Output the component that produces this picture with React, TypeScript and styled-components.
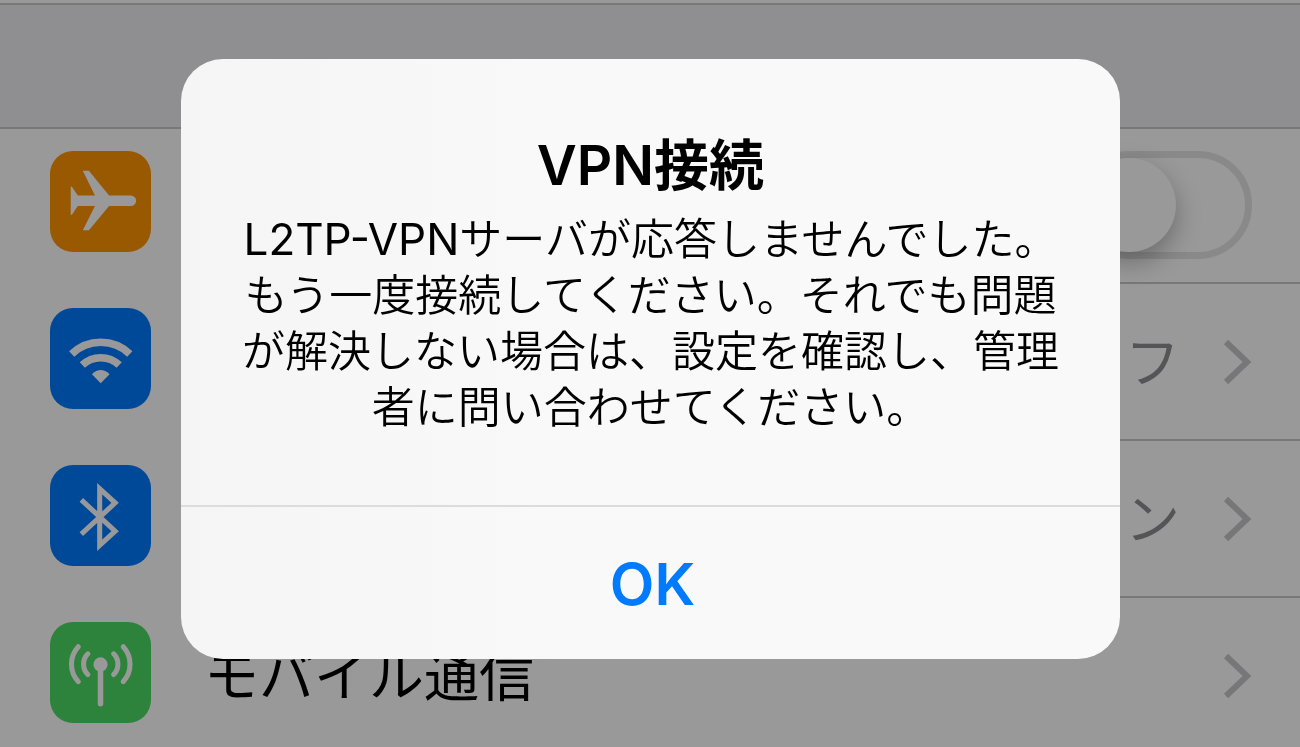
import React from 'react';
import styled, { createGlobalStyle } from 'styled-components';

const GlobalStyle = createGlobalStyle`
  * { box-sizing: border-box; }
  html, body, #root { height: 100%; }
  body {
    margin: 0;
    overflow: hidden;
    background: #ffffff;
    color: #000000;
    font-family: Inter, 'Noto Sans CJK JP', sans-serif;
  }
`;

const Page = styled.main`
  height: 100%;
  overflow: hidden;
`;

const PreviousGroup = styled.div`
  height: 5px;
  border-bottom: 2px solid #c8c7cc;
`;

const GroupGap = styled.div`
  height: 124px;
  background: #efeff4;
  border-bottom: 2px solid #c8c7cc;
`;

const List = styled.ul`
  margin: -2px 0 0;
  padding: 0;
  list-style: none;
`;

const Item = styled.li`
  display: flex;
  height: 157px;
  padding-left: 50px;
`;

const Tile = styled.span<{ $color: string }>`
  flex: none;
  width: 101px;
  height: 101px;
  margin: 24px 53px 0 0;
  border-radius: 23px;
  background: ${(p) => p.$color};

  svg {
    display: block;
    width: 100%;
    height: 100%;
  }
`;

const ItemBody = styled.div`
  display: flex;
  flex: 1;
  align-items: center;
  justify-content: space-between;
  padding-right: 48px;
  border-bottom: 2px solid #c8c7cc;
`;

const ItemLink = styled(ItemBody).attrs({ as: 'a' })<{ href: string }>`
  color: inherit;
  text-decoration: none;
`;

const Label = styled.span`
  font-size: 55px;
  line-height: 80px;
`;

const Value = styled.span`
  margin: 0 42px 0 auto;
  color: #8e8e93;
  font-size: 55px;
  line-height: 80px;
`;

const Chevron = styled.svg`
  flex: none;
  width: 30px;
  height: 46px;
`;

const Switch = styled.input`
  appearance: none;
  width: 177px;
  height: 108px;
  margin: 0 0 0 auto;
  border: 7px solid #e5e5e5;
  border-radius: 54px;
  background: #ffffff;

  &::before {
    content: '';
    display: block;
    width: 94px;
    height: 94px;
    border-radius: 50%;
    background: #ffffff;
    box-shadow: 0 10px 26px rgba(0, 0, 0, 0.3);
  }
`;

const Backdrop = styled.div`
  position: fixed;
  inset: 0;
  display: flex;
  align-items: flex-start;
  justify-content: center;
  padding: 59px 180px 0 181px;
  background: rgba(0, 0, 0, 0.4);
`;

const Alert = styled.section`
  flex: 1;
  overflow: hidden;
  border-radius: 42px;
  background: linear-gradient(90deg, #f5f5f5, #f9f9f9 40%);
  text-align: center;
`;

const AlertText = styled.div`
  padding: 66px 32px 70px;
`;

const Title = styled.h1`
  margin: 0;
  font-size: 55px;
  font-weight: 600;
  line-height: 80px;
`;

const Message = styled.p`
  margin: 6px 0 0;
  font-size: 43px;
  font-weight: 350;
  line-height: 56px;
  white-space: nowrap;
`;

const Latin = styled.span`
  font-size: 44px;
  font-weight: 400;
`;

const OkButton = styled.button`
  display: block;
  width: 100%;
  height: 154px;
  padding: 2px 0 0 4px;
  border: 0;
  border-top: 2px solid #dcdcdf;
  background: transparent;
  color: #007aff;
  font-family: inherit;
  font-size: 58px;
  font-weight: 600;
`;

const AirplaneIcon = () => (
  <svg viewBox="0 0 100 100" fill="#fff" aria-hidden="true">
    <path d="M20.500 35.500h1.200L27.500 44H44.500L32.500 19.500H38.500L58.500 44H80a5.200 5.200 0 0 1 0 10.500H58.500L38.500 78.500H32.500L44.500 54.500H27.500L21.700 63H20.500Z" />
  </svg>
);

const WifiIcon = () => (
  <svg viewBox="0 0 100 100" aria-hidden="true">
    <g fill="none" stroke="#fff" strokeWidth="7.500">
      <path d="M21.500 45.500A41.500 41.500 0 0 1 79 45.500" />
      <path d="M32 56.500A26.500 26.500 0 0 1 68.500 56.500" />
    </g>
    <path fill="#fff" d="M41.500 65.500Q50.200 57.500 59 65.500L50.200 74.500Z" />
  </svg>
);

const BluetoothIcon = () => (
  <svg viewBox="0 0 100 100" fill="none" stroke="#fff" strokeWidth="5" aria-hidden="true">
    <path d="M31 34.500L64.500 65.500 49.200 79.500V23.500L64.500 37.500 31 68.500" />
  </svg>
);

const CellularIcon = () => (
  <svg viewBox="0 0 100 100" fill="none" stroke="#fff" strokeWidth="5" strokeLinecap="round" aria-hidden="true">
    <circle cx="50" cy="42" r="7" fill="#fff" stroke="none" />
    <path d="M50 42V81" strokeWidth="5.500" />
    <path d="M37.500 31.500A14.500 14.500 0 0 0 37.500 52" />
    <path d="M28 24.500A25.500 25.500 0 0 0 28 59" />
    <path d="M63 31.500A14.500 14.500 0 0 1 63 52" />
    <path d="M72.500 24.500A25.500 25.500 0 0 1 72.500 59" />
  </svg>
);

const Disclosure = () => (
  <Chevron viewBox="0 0 30 46" fill="none" stroke="#c7c7cc" strokeWidth="6" aria-hidden="true">
    <path d="M4 3L25 23 4 43" />
  </Chevron>
);

export default function App() {
  return (
    <>
      <GlobalStyle />
      <Page>
        <PreviousGroup />
        <GroupGap />
        <List>
          <Item>
            <Tile $color="#ff9500"><AirplaneIcon /></Tile>
            <ItemBody>
              <Switch type="checkbox" role="switch" aria-label="機内モード" />
            </ItemBody>
          </Item>
          <Item>
            <Tile $color="#007aff"><WifiIcon /></Tile>
            <ItemLink href="#wifi" aria-label="Wi-Fi">
              <Value>フ</Value>
              <Disclosure />
            </ItemLink>
          </Item>
          <Item>
            <Tile $color="#007aff"><BluetoothIcon /></Tile>
            <ItemLink href="#bluetooth" aria-label="Bluetooth">
              <Value>ン</Value>
              <Disclosure />
            </ItemLink>
          </Item>
          <Item>
            <Tile $color="#4cd964"><CellularIcon /></Tile>
            <ItemLink href="#cellular">
              <Label>モバイル通信</Label>
              <Disclosure />
            </ItemLink>
          </Item>
        </List>
      </Page>
      <Backdrop>
        <Alert role="alertdialog" aria-modal="true" aria-labelledby="alert-title" aria-describedby="alert-message">
          <AlertText>
            <Title id="alert-title">VPN接続</Title>
            <Message id="alert-message">
              <Latin>L2TP-VPN</Latin>サーバが応答しませんでした。<br />
              もう一度接続してください。それでも問題<br />
              が解決しない場合は、設定を確認し、管理<br />
              者に問い合わせてください。
            </Message>
          </AlertText>
          <OkButton type="button">OK</OkButton>
        </Alert>
      </Backdrop>
    </>
  );
}
